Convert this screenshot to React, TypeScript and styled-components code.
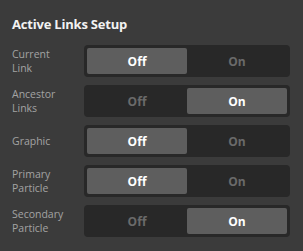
import * as React from 'react';
import styled, { createGlobalStyle } from 'styled-components';

const GlobalStyle = createGlobalStyle`
  html, body {
    margin: 0;
    padding: 0;
    background: #3b3b3b;
  }
  body {
    font-family: "Open Sans", "Noto Sans", sans-serif;
  }
`;

const Panel = styled.div`
  width: 303px;
  height: 251px;
  box-sizing: border-box;
  padding: 15px 13px 0 12px;
  background: #3b3b3b;
`;

const Title = styled.div`
  font-size: 13px;
  font-weight: 700;
  color: #f2f2f2;
  line-height: 18px;
  margin-bottom: 12px;
  letter-spacing: -0.2px;
`;

const Rows = styled.div`
  display: flex;
  flex-direction: column;
  gap: 8px;
`;

const Row = styled.div`
  display: flex;
  align-items: center;
  height: 32px;
`;

const Label = styled.div`
  width: 72px;
  font-size: 10.5px;
  line-height: 14px;
  color: #a3a3a3;
`;

const Track = styled.div`
  display: flex;
  width: 206px;
  height: 32px;
  box-sizing: border-box;
  padding: 3px;
  background: #282828;
  border-radius: 4px;
`;

const Option = styled.button<{ $active: boolean }>`
  flex: 1;
  border: none;
  margin: 0;
  padding: 0;
  border-radius: 2px;
  font-family: inherit;
  font-size: 12px;
  font-weight: 700;
  cursor: pointer;
  background: ${p => (p.$active ? '#5e5e5e' : 'transparent')};
  color: ${p => (p.$active ? '#ffffff' : '#6a6a6a')};
`;

const settings = [
  { label: ['Current', 'Link'], on: false },
  { label: ['Ancestor', 'Links'], on: true },
  { label: ['Graphic'], on: false },
  { label: ['Primary', 'Particle'], on: false },
  { label: ['Secondary', 'Particle'], on: true },
];

const Toggle = ({ initial }: { initial: boolean }) => {
  const [on, setOn] = React.useState(initial);
  return (
    <Track>
      <Option $active={!on} onClick={() => setOn(false)}>Off</Option>
      <Option $active={on} onClick={() => setOn(true)}>On</Option>
    </Track>
  );
};

export default function App() {
  return (
    <Panel>
      <GlobalStyle />
      <Title>Active Links Setup</Title>
      <Rows>
        {settings.map(s => (
          <Row key={s.label.join(' ')}>
            <Label>
              {s.label.map(l => (
                <div key={l}>{l}</div>
              ))}
            </Label>
            <Toggle initial={s.on} />
          </Row>
        ))}
      </Rows>
    </Panel>
  );
}
